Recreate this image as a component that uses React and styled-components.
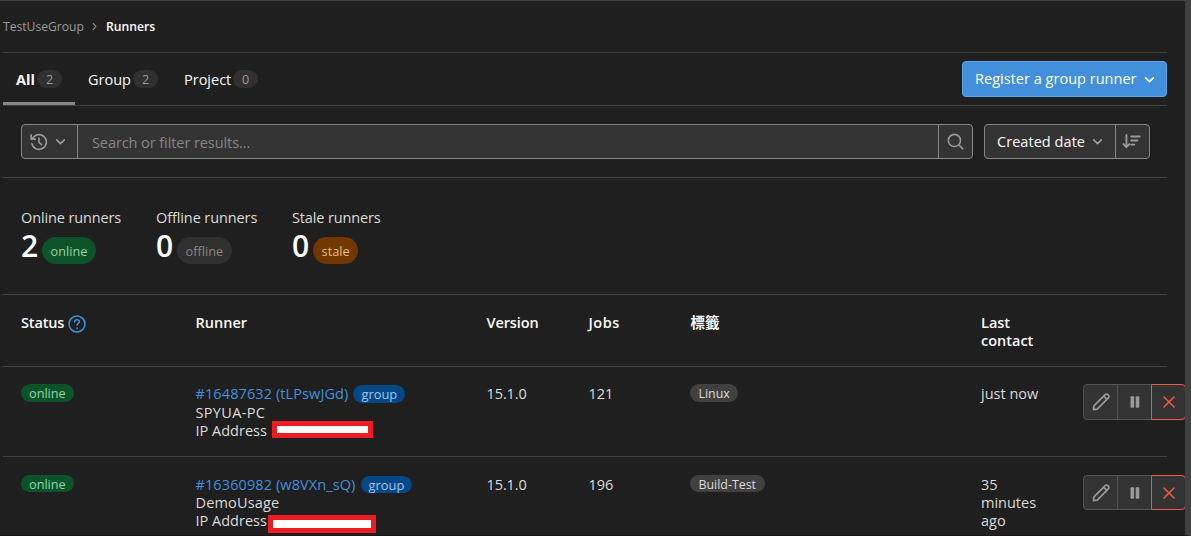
import React from 'react';
import styled, { createGlobalStyle } from 'styled-components';

const GlobalStyle = createGlobalStyle`
  *, *::before, *::after { box-sizing: border-box; }
  body {
    margin: 0;
    background: #1f1f1f;
    color: #dbdbdb;
    font: 14.5px/18px "Open Sans", "Noto Sans CJK TC", sans-serif;
    overflow: hidden;
  }
  button { font: inherit; color: inherit; cursor: pointer; }
  svg { display: block; flex: none; }
`;

const Page = styled.main`
  height: 536px;
  border-top: 1px solid #404040;
  border-right: 6px solid #404040;
  border-bottom: 1px solid #191718;
  padding-left: 3px;
  overflow: hidden;
  white-space: nowrap;
`;

const Content = styled.div`
  width: 1164px;
`;

const Text = styled.span`
  letter-spacing: ${(p) => p.$track || 0}px;
`;

const Breadcrumbs = styled.nav`
  display: flex;
  align-items: center;
  height: 52px;
  padding-top: 1px;
  border-bottom: 1px solid #404040;
  font-size: 12.2px;
  color: #999;
  svg { margin: 0 6px 2px 5px; }
  strong { font-weight: 600; color: #fff; }
`;

const TabBar = styled.div`
  display: flex;
  justify-content: space-between;
  height: 53px;
  border-bottom: 1px solid #404040;
`;

const Tabs = styled.div`
  display: flex;
`;

const Tab = styled.a`
  display: flex;
  align-items: center;
  width: ${(p) => p.$width}px;
  padding-left: 13px;
  color: #fafafa;
  font-weight: ${(p) => (p.$active ? 700 : 400)};
  box-shadow: ${(p) => (p.$active ? 'inset 0 -3px #868686' : 'none')};
`;

const TabLabel = styled.span`
  width: ${(p) => p.$width}px;
  padding-top: 1px;
  letter-spacing: ${(p) => p.$track || 0}px;
`;

const Count = styled.span`
  width: 25px;
  height: 18px;
  border-radius: 9px;
  background: #303030;
  color: #999;
  font-size: 12.6px;
  font-weight: 400;
  line-height: 19px;
  text-align: center;
`;

const PrimaryButton = styled.button`
  display: flex;
  align-items: center;
  justify-content: space-between;
  width: 205px;
  height: 36px;
  margin-top: 8px;
  padding: 0 9px 0 12px;
  border: 1px solid #63a6e9;
  border-radius: 4px;
  background: #428fdc;
  color: #fff;
`;

const FilterBar = styled.div`
  display: flex;
  gap: 11px;
  height: 72px;
  padding: 18px 17px 0 18px;
  border-bottom: 1px solid #404040;
`;

const ControlGroup = styled.div`
  display: flex;
  flex: ${(p) => (p.$grow ? 1 : 'none')};
  height: 35px;
  border: 1px solid #868686;
  border-radius: 4px;
  background: #333;
  overflow: hidden;
`;

const ControlButton = styled.button`
  display: flex;
  align-items: center;
  width: ${(p) => p.$width}px;
  padding: 0 ${(p) => p.$right || 0}px 0 ${(p) => p.$left || 0}px;
  justify-content: space-between;
  border: 0;
  background: none;
  color: ${(p) => (p.$bright ? '#fafafa' : '#999')};
  svg { color: #999; }
  & + &, input + & { border-left: 1px solid #868686; }
`;

const SearchInput = styled.input`
  flex: 1;
  min-width: 0;
  border: 0;
  border-left: 1px solid #868686;
  padding: 3px 14px 0;
  background: none;
  color: #fafafa;
  font: inherit;
  outline: none;
  &::placeholder { color: #868686; opacity: 1; letter-spacing: -0.08px; }
`;

const Stats = styled.section`
  display: flex;
  height: 117px;
  padding: 31px 18px 0;
  border-bottom: 1px solid #404040;
`;

const Stat = styled.div`
  width: ${(p) => p.$width}px;
`;

const StatValue = styled.div`
  display: flex;
  height: 37px;
  margin-top: 1px;
  strong {
    width: 21px;
    color: #fff;
    font-size: 30px;
    font-weight: 600;
    line-height: 35px;
    letter-spacing: -0.5px;
  }
`;

const tones = {
  success: ['#0d532a', '#91d4a8'],
  muted: ['#303030', '#868686'],
  warning: ['#703800', '#e9be74'],
  info: ['#064787', '#9dc7f1'],
  neutral: ['#404040', '#dbdbdb'],
};

const Badge = styled.span`
  display: inline-block;
  height: ${(p) => p.$height || 18}px;
  padding: 0 ${(p) => p.$pad || 8}px;
  border-radius: 14px;
  background: ${(p) => tones[p.$tone][0]};
  color: ${(p) => tones[p.$tone][1]};
  font-size: ${(p) => p.$size || 12.7}px;
  line-height: ${(p) => p.$line || 19}px;
  overflow: hidden;
`;

const StatBadge = styled(Badge)`
  margin-top: 9px;
  height: 27px;
  padding: 0 8.6px;
  line-height: 29px;
`;

const TableRow = styled.div`
  display: grid;
  grid-template-columns: 174px 291px 102px 102px 291px 102px 102px;
  height: ${(p) => p.$height}px;
  padding: ${(p) => p.$top}px 0 0 18px;
  border-bottom: 1px solid #404040;
  font-weight: ${(p) => (p.$head ? 600 : 400)};
  color: ${(p) => (p.$head ? '#fafafa' : '#dbdbdb')};
`;

const HeadStatus = styled.div`
  display: flex;
  align-items: flex-start;
  gap: 4px;
  svg { margin-top: 1px; color: #428fdc; }
`;

const Cell = styled.div`
  padding-top: ${(p) => p.$top || 0}px;
  padding-left: ${(p) => p.$inset || 0}px;
`;

const RunnerTitle = styled.div`
  display: flex;
  gap: 5px;
  height: ${(p) => p.$height}px;
  padding-top: 1px;
  a { color: #428fdc; }
`;

const AddressLine = styled.div`
  position: relative;
`;

const Redaction = styled.span`
  position: absolute;
  left: ${(p) => p.$left}px;
  top: ${(p) => p.$top}px;
  width: ${(p) => p.$width}px;
  height: ${(p) => p.$height}px;
  border: 5px solid #ed1c24;
  background: #fff;
`;

const Actions = styled.div`
  display: flex;
  height: ${(p) => p.$height}px;
`;

const ActionButton = styled.button`
  display: flex;
  flex: none;
  align-items: center;
  justify-content: center;
  width: 35px;
  padding: 0;
  border: 1px solid ${(p) => (p.$danger ? '#ec5941' : '#535353')};
  border-radius: ${(p) => (p.$first ? '4px 0 0 4px' : p.$danger ? '0 4px 4px 0' : 0)};
  margin-left: ${(p) => (p.$first ? 0 : -1)}px;
  background: #333;
  color: ${(p) => (p.$danger ? '#ec5941' : '#999')};
`;

const Svg = ({ size = 16, width = 2, children }) => (
  <svg width={size} height={size} viewBox="0 0 16 16" fill="none" stroke="currentColor" strokeWidth={width} strokeLinecap="round" strokeLinejoin="round">
    {children}
  </svg>
);

const ChevronDown = ({ size = 15 }) => <Svg size={size} width={1.8}><path d="M3.9 6.2 8 10.2l4.1-4" /></Svg>;
const ChevronRight = () => <Svg size={11} width={1.5}><path d="m6 3.5 4.2 4.5L6 12.5" /></Svg>;
const HistoryIcon = () => (
  <Svg size={18} width={1.45}>
    <path d="M2.2 5.1A6.5 6.5 0 1 1 1.7 9.4M1 1.7v3.7h3.7M8 4.5v3.8l2.2 2" />
  </Svg>
);
const SearchIcon = () => <Svg size={17} width={1.5}><circle cx="7" cy="7" r="5.7" /><path d="m11.3 11.3 3.6 3.6" /></Svg>;
const SortIcon = () => (
  <Svg size={19} width={1.6}>
    <path d="M3.7 2.5v10M1.2 10.2l2.5 2.6 2.5-2.6M7.8 3.8h7.1M7.8 7.2h5.1M7.8 10.6h2.6" />
  </Svg>
);
const HelpIcon = () => (
  <Svg size={18} width={1.35}>
    <circle cx="8" cy="8" r="7.1" />
    <path d="M5.9 6.2C6 4.9 6.9 4.3 8 4.3c1.2 0 2.1.7 2.1 1.8C10.1 7.5 8 7.6 8 9.2" />
    <circle cx="8" cy="11.7" r=".45" fill="currentColor" strokeWidth=".8" />
  </Svg>
);
const PencilIcon = () => (
  <Svg size={18} width={1.5}>
    <path d="M1.3 14.7l.4-3.3 8.9-8.9 1-1a1.75 1.75 0 0 1 2.5 0l.4.4a1.75 1.75 0 0 1 0 2.5l-9.9 9.9zM10.4 2.8l2.8 2.8" />
  </Svg>
);
const PauseIcon = () => (
  <svg width="10" height="12" viewBox="0 0 10 12" fill="currentColor">
    <rect x="0.5" y="0.3" width="3.6" height="11.4" rx="1" />
    <rect x="5.7" y="0.3" width="3.6" height="11.4" rx="1" />
  </svg>
);
const CloseIcon = () => <Svg size={16} width={1.6}><path d="m3 3 10 10M13 3 3 13" /></Svg>;

const runners = [
  {
    id: '#16487632 (tLPswJGd)', track: 0.1, name: 'SPYUA-PC', nameTrack: 0.35, jobs: '121', tag: 'Linux', contact: ['just now'],
    height: 90, top: 17, titleHeight: 20, badge: 18, actions: 36, mask: { $left: 76.5, $top: -1, $width: 101, $height: 17 },
  },
  {
    id: '#16360982 (w8VXn_sQ)', track: 0.1, name: 'DemoUsage', nameTrack: 0.15, jobs: '196', tag: 'Build-Test', contact: ['35', 'minutes', 'ago'],
    height: 91, top: 18, titleHeight: 19, badge: 17, actions: 35, mask: { $left: 72.5, $top: 3, $width: 108, $height: 18 },
  },
];

const RunnerRow = ({ runner }) => (
  <TableRow $height={runner.height} $top={runner.top}>
    <Cell><Badge $tone="success" $height={runner.badge} $line={18}>online</Badge></Cell>
    <Cell $inset={0.5}>
      <RunnerTitle $height={runner.titleHeight}>
        <a><Text $track={runner.track}>{runner.id}</Text></a>
        <Badge $tone="info" $height={runner.badge} $size={12.9} $line={18}>group</Badge>
      </RunnerTitle>
      <Text $track={runner.nameTrack}>{runner.name}</Text>
      <AddressLine>IP Address<Redaction {...runner.mask} /></AddressLine>
    </Cell>
    <Cell $top={1} $inset={0.5}><Text $track={-0.1}>15.1.0</Text></Cell>
    <Cell $top={1} $inset={0.5}>{runner.jobs}</Cell>
    <Cell><Badge $tone="neutral" $height={runner.badge} $size={12.4} $pad={8.5} $line={19}>{runner.tag}</Badge></Cell>
    <Cell $top={1}>{runner.contact.map((line) => <div key={line}>{line}</div>)}</Cell>
    <Actions $height={runner.actions}>
      <ActionButton $first aria-label="Edit"><PencilIcon /></ActionButton>
      <ActionButton aria-label="Pause"><PauseIcon /></ActionButton>
      <ActionButton $danger aria-label="Delete"><CloseIcon /></ActionButton>
    </Actions>
  </TableRow>
);

export default function App() {
  return (
    <>
      <GlobalStyle />
      <Page>
        <Content>
          <Breadcrumbs>
            <Text $track={-0.03}>TestUseGroup</Text>
            <ChevronRight />
            <strong>Runners</strong>
          </Breadcrumbs>
          <TabBar>
            <Tabs>
              <Tab $active $width={72}><TabLabel $width={21}>All</TabLabel><Count>2</Count></Tab>
              <Tab $width={96}><TabLabel $width={45}>Group</TabLabel><Count>2</Count></Tab>
              <Tab $width={96}><TabLabel $width={49}>Project</TabLabel><Count>0</Count></Tab>
            </Tabs>
            <PrimaryButton><Text $track={0.02}>Register a group runner</Text><ChevronDown /></PrimaryButton>
          </TabBar>
          <FilterBar>
            <ControlGroup $grow>
              <ControlButton $width={55} $left={8} $right={9} aria-label="History"><HistoryIcon /><ChevronDown /></ControlButton>
              <SearchInput placeholder="Search or filter results..." />
              <ControlButton $width={34} $left={8} aria-label="Search"><SearchIcon /></ControlButton>
            </ControlGroup>
            <ControlGroup>
              <ControlButton $bright $width={130} $left={12} $right={10}><Text $track={0.05}>Created date</Text><ChevronDown /></ControlButton>
              <ControlButton $width={34} $left={6} aria-label="Sort direction"><SortIcon /></ControlButton>
            </ControlGroup>
          </FilterBar>
          <Stats>
            <Stat $width={135}>
              <Text $track={-0.13}>Online runners</Text>
              <StatValue><strong>2</strong><StatBadge $tone="success">online</StatBadge></StatValue>
            </Stat>
            <Stat $width={136}>
              <Text $track={-0.1}>Offline runners</Text>
              <StatValue><strong>0</strong><StatBadge $tone="muted">offline</StatBadge></StatValue>
            </Stat>
            <Stat $width={136}>
              <Text $track={-0.13}>Stale runners</Text>
              <StatValue><strong>0</strong><StatBadge $tone="warning">stale</StatBadge></StatValue>
            </Stat>
          </Stats>
          <TableRow $head $height={72} $top={19}>
            <HeadStatus><Text $track={-0.15}>Status</Text><HelpIcon /></HeadStatus>
            <Cell $inset={0.5}>Runner</Cell>
            <Cell $inset={0.5}><Text $track={-0.1}>Version</Text></Cell>
            <Cell $inset={0.5}><Text $track={0.5}>Jobs</Text></Cell>
            <Cell $inset={0.5}>標籤</Cell>
            <Cell>Last<br />contact</Cell>
          </TableRow>
          {runners.map((runner) => <RunnerRow key={runner.id} runner={runner} />)}
        </Content>
      </Page>
    </>
  );
}
